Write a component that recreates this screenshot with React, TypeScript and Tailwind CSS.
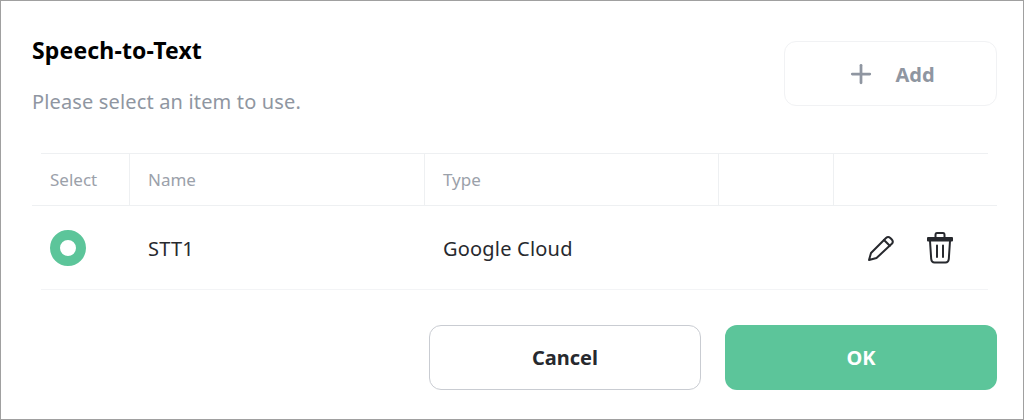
import React from "react";
import { Plus } from "lucide-react";

const font = "font-['Noto_Sans','Noto_Sans_CJK_KR',sans-serif]";

function PencilIcon() {
  return (
    <svg width="28" height="28" viewBox="0 0 28 28" fill="none" stroke="#27292e" strokeWidth="2" strokeLinejoin="round" strokeLinecap="round">
      <path d="M2 26 L4 19 L19 4 C20.3 2.8 22 2.8 23.3 4 L24.8 5.5 C26 6.8 26 8.5 24.8 9.8 L9.5 24 Z" />
      <path d="M17 6 L22.8 11.8" />
    </svg>
  );
}

function TrashIcon() {
  return (
    <svg width="28" height="34" viewBox="0 0 28 34" fill="none" stroke="#27292e" strokeWidth="2" strokeLinecap="round" strokeLinejoin="round">
      <path d="M9.5 6.5 V4 C9.5 3 10.2 2 11 2 H17 C17.8 2 18.5 3 18.5 4 V6.5" />
      <path d="M2 7 H26 V9.5 H2 Z" fill="#27292e" />
      <path d="M4 10 L5.2 28 C5.4 30 6.6 31.5 8.5 31.5 H19.5 C21.4 31.5 22.6 30 22.8 28 L24 10" />
      <path d="M11 14.5 V26 M17 14.5 V26" />
    </svg>
  );
}

export default function App() {
  return (
    <div className={`${font} w-[1024px] h-[420px] bg-white border border-[#a0a0a0] overflow-hidden flex flex-col pl-[31px] pr-[26px]`}>
      {/* cabeçalho */}
      <div className="flex justify-between h-[152px]">
        <div className="pt-[33px]">
          <h2 className="text-[23px] leading-[32px] tracking-[0.15px] font-bold text-black">Speech-to-Text</h2>
          <p className="mt-[20px] text-[20px] leading-[32px] tracking-[0.15px] text-[#8f96a1]">Please select an item to use.</p>
        </div>
        <button className="mt-[40px] w-[213px] h-[65px] rounded-[12px] border border-[#f1f2f4] flex items-center justify-center gap-[19px] text-[#8f96a1]">
          <Plus size={30} strokeWidth={2.2} />
          <span className="text-[20px] font-bold pt-[3px]">Add</span>
        </button>
      </div>

      {/* tabela */}
      <div className="border-t border-[#eef0f2] mx-[9px]" />
      <div className="grid grid-cols-[98px_295px_294px_115px_1fr] h-[52px] border-b border-[#eef0f2] text-[17px] text-[#9ba1aa] items-stretch">
        <div className="flex items-center pl-[18px] border-r border-[#eef0f2]">Select</div>
        <div className="flex items-center pl-[18px] border-r border-[#eef0f2]">Name</div>
        <div className="flex items-center pl-[18px] border-r border-[#eef0f2]">Type</div>
        <div className="border-r border-[#eef0f2]" />
        <div />
      </div>
      <div className="grid grid-cols-[89px_295px_294px_1fr] h-[84px] border-b border-[#f3f4f6] mx-[9px] text-[20px] tracking-[0.2px] text-[#27292e] items-center">
        <div className="pl-[9px]">
          <div className="w-[36px] h-[36px] rounded-full border-[10px] border-[#5cc59a] bg-white" />
        </div>
        <div className="pl-[18px] pt-[2px]">STT1</div>
        <div className="pl-[18px] pt-[2px]">Google Cloud</div>
        <div className="flex items-center justify-end gap-[31px] pr-[34px]">
          <PencilIcon />
          <TrashIcon />
        </div>
      </div>

      {/* botões */}
      <div className="flex justify-end gap-[24px] mt-[35px]">
        <button className="w-[272px] h-[65px] rounded-[12px] border border-[#c9ccd2] bg-white text-[20px] font-bold text-[#27292e] pt-[1px]">Cancel</button>
        <button className="w-[272px] h-[65px] rounded-[12px] bg-[#5cc59a] text-[20px] font-bold text-white pt-[1px]">OK</button>
      </div>
    </div>
  );
}
